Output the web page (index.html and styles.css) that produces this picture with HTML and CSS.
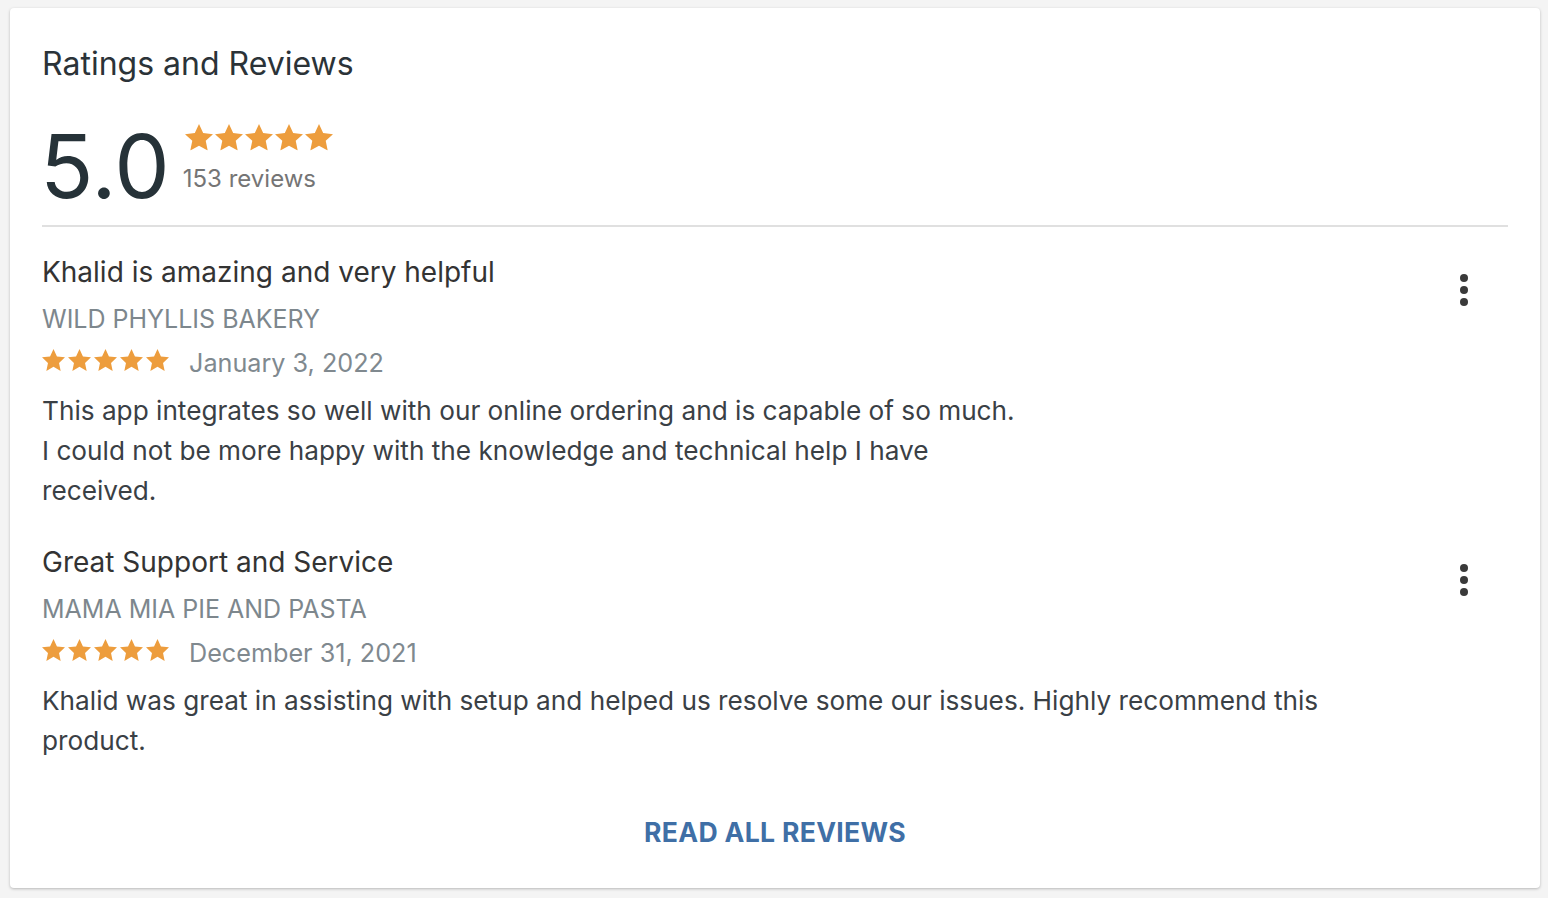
FILE: index.html
```html
<!DOCTYPE html>
<html lang="en">
<head>
<meta charset="utf-8">
<title>Ratings and Reviews</title>
<link rel="stylesheet" href="styles.css">
</head>
<body>
<svg width="0" height="0" class="defs" aria-hidden="true">
  <defs>
    <symbol id="star" viewBox="1.8 1.6 20.4 19.4">
      <path d="M12 1.6l3.05 6.55 7.15.85-5.3 4.9 1.45 7.1L12 17.4l-6.35 3.6 1.45-7.1L1.8 9l7.15-.85z"/>
    </symbol>
  </defs>
</svg>
<main class="card">
  <h1 class="card-title">Ratings and Reviews</h1>
  <div class="summary">
    <div class="score">5.0</div>
    <div class="summary-meta">
      <div class="stars stars-lg">
        <svg><use href="#star"/></svg><svg><use href="#star"/></svg><svg><use href="#star"/></svg><svg><use href="#star"/></svg><svg><use href="#star"/></svg>
      </div>
      <div class="count">153 reviews</div>
    </div>
  </div>
  <hr class="divider">
  <section class="reviews">
    <article class="review">
      <div class="review-body">
        <h2 class="review-title">Khalid is amazing and very helpful</h2>
        <div class="review-author">WILD PHYLLIS BAKERY</div>
        <div class="review-meta">
          <div class="stars stars-sm">
            <svg><use href="#star"/></svg><svg><use href="#star"/></svg><svg><use href="#star"/></svg><svg><use href="#star"/></svg><svg><use href="#star"/></svg>
          </div>
          <span class="review-date">January 3, 2022</span>
        </div>
        <p class="review-text">This app integrates so well with our online ordering and is capable of so much.<br>I could not be more happy with the knowledge and technical help I have<br>received.</p>
      </div>
      <button class="kebab" aria-label="More options"><span></span><span></span><span></span></button>
    </article>
    <article class="review">
      <div class="review-body">
        <h2 class="review-title">Great Support and Service</h2>
        <div class="review-author">MAMA MIA PIE AND PASTA</div>
        <div class="review-meta">
          <div class="stars stars-sm">
            <svg><use href="#star"/></svg><svg><use href="#star"/></svg><svg><use href="#star"/></svg><svg><use href="#star"/></svg><svg><use href="#star"/></svg>
          </div>
          <span class="review-date">December 31, 2021</span>
        </div>
        <p class="review-text">Khalid was great in assisting with setup and helped us resolve some our issues. Highly recommend this product.</p>
      </div>
      <button class="kebab" aria-label="More options"><span></span><span></span><span></span></button>
    </article>
  </section>
  <div class="actions">
    <a class="read-all" href="#">READ ALL REVIEWS</a>
  </div>
</main>
</body>
</html>
```

FILE: styles.css
```css
* { box-sizing: border-box; }

html, body {
  margin: 0;
  background: #f4f4f4;
}

body {
  padding: 8px 8px 10px 10px;
  font-family: Inter, "Noto Sans", sans-serif;
  color: #2b3338;
}

.defs { position: absolute; }

.card {
  display: flex;
  flex-direction: column;
  height: 880px;
  background: #fff;
  border-radius: 4px;
  box-shadow: 0 1px 3px rgba(0, 0, 0, 0.25);
  padding: 38px 32px 0 32px;
}

.card-title {
  margin: 0;
  font-size: 32px;
  line-height: 36px;
  font-weight: 400;
  color: #2b3338;
}

.summary {
  display: flex;
  align-items: flex-start;
  gap: 15px;
  margin-top: 40px;
}

.score {
  font-size: 88px;
  line-height: 88px;
  font-weight: 400;
  margin-left: -2px;
  color: #263238;
}

.summary-meta {
  display: flex;
  flex-direction: column;
  padding-top: 2px;
  margin-left: -2px;
}

.stars {
  display: flex;
  color: #ed9d3d;
}

.stars svg { fill: currentColor; display: block; }

.stars-lg { gap: 2px; margin-left: 2px; }
.stars-lg svg { width: 28px; height: 26.6px; }

.stars-sm { gap: 3px; margin-bottom: 6px; }
.stars-sm svg { width: 23px; height: 21.9px; }

.count {
  margin-top: 13px;
  font-size: 24px;
  line-height: 30px;
  color: #757575;
}

.divider {
  border: 0;
  height: 2px;
  background: #e0e0e0;
  margin: 15px 0 0 0;
}

.reviews {
  display: flex;
  flex-direction: column;
  gap: 33px;
  margin-top: 27px;
}

.review {
  display: flex;
  align-items: flex-start;
}

.review-body {
  flex: 1;
  max-width: 1340px;
}

.review-title {
  margin: 0;
  font-size: 28px;
  line-height: 36px;
  font-weight: 400;
  color: #333;
}

.review-author {
  margin-top: 14px;
  font-size: 25px;
  line-height: 30px;
  color: #7d878d;
}

.review-meta {
  display: flex;
  align-items: center;
  gap: 20px;
  margin-top: 14px;
  height: 30px;
}

.review-date {
  font-size: 25.2px;
  line-height: 30px;
  color: #80898f;
}

.review-text {
  margin: 13px 0 0 0;
  font-size: 26.2px;
  line-height: 40px;
  color: #3a4045;
}

.kebab {
  margin-left: auto;
  margin-top: 12px;
  width: 48px;
  height: 48px;
  margin-right: 20px;
  border: 0;
  background: transparent;
  padding: 0;
  display: flex;
  flex-direction: column;
  align-items: center;
  justify-content: center;
  gap: 4px;
  cursor: pointer;
}

.kebab span {
  width: 8px;
  height: 8px;
  border-radius: 50%;
  background: #3a3a3a;
}

.actions {
  display: flex;
  justify-content: center;
  margin-top: auto;
  padding-bottom: 36px;
}

.read-all {
  font-size: 26.6px;
  line-height: 40px;
  font-weight: 700;
  color: #3f6fa6;
  text-decoration: none;
  letter-spacing: 0.3px;
}
```
